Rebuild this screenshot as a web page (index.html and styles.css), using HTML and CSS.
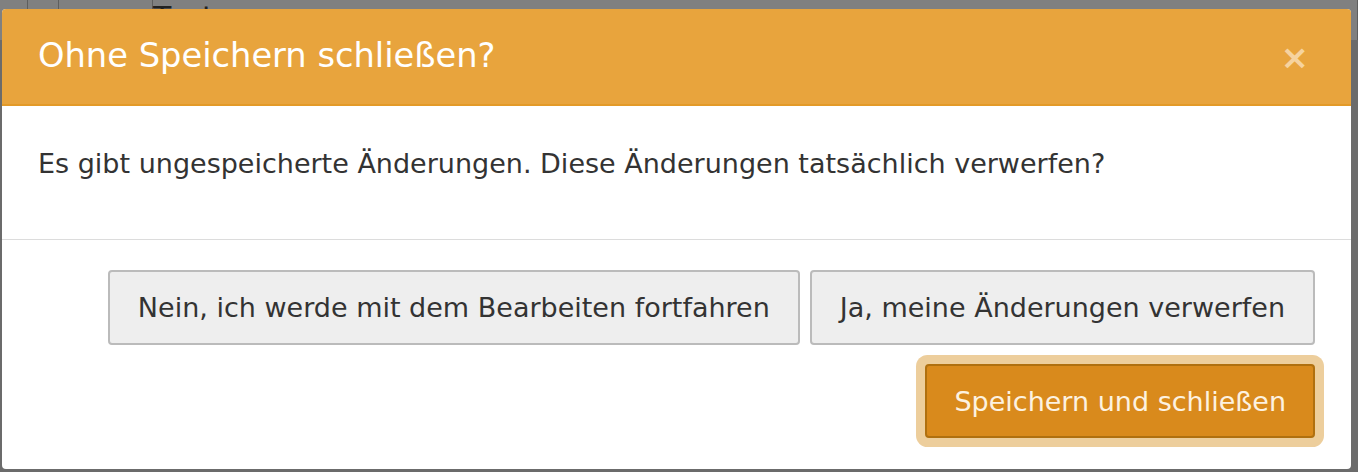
FILE: index.html
```html
<!DOCTYPE html>
<html lang="de">
<head>
    <meta charset="UTF-8">
    <title>Ohne Speichern schließen?</title>
    <link rel="stylesheet" href="styles.css">
</head>
<body>

    <!-- page behind the overlay -->
    <div class="backdrop">
        <div class="bg-row top">
            <span class="cell w1"></span>
            <span class="cell w2"></span>
            <span class="cell w3"><i class="chk"></i></span>
            <span class="cell w4">Text</span>
        </div>
    </div>

    <div class="modal">
        <div class="modal-header">
            <h3>Ohne Speichern schließen?</h3>
            <span class="close">&times;</span>
        </div>
        <div class="modal-body">
            <p>Es gibt ungespeicherte Änderungen. Diese Änderungen tatsächlich verwerfen?</p>
        </div>
        <div class="modal-footer">
            <div class="btn-row">
                <button class="btn">Nein, ich werde mit dem Bearbeiten fortfahren</button>
                <button class="btn">Ja, meine Änderungen verwerfen</button>
            </div>
            <div class="btn-row">
                <button class="btn btn-primary">Speichern und schließen</button>
            </div>
        </div>
    </div>

</body>
</html>
```

FILE: styles.css
```css
html, body {
    margin: 0;
    height: 100%;
}
body {
    font-family: "DejaVu Sans", Verdana, sans-serif;
    background: #6a6a6a;
    overflow: hidden;
    position: relative;
}
.backdrop {
    height: 100%;
    background: #6b6b6b;
}
.bg-row {
    display: flex;
    height: 40px;
    background: #808080;
}
.cell {
    border-right: 1px solid #5e5e5e;
    color: #222;
    font-size: 30px;
}
.w1 { width: 27px; }
.w2 { width: 30px; }
.w3 { width: 93px; }
.w4 { flex: 1; }
.modal {
    position: absolute;
    left: 2px;
    top: 9px;
    width: 1349px;
    height: 460px;
    background: #fff;
    border-radius: 4px;
    overflow: hidden;
}
.modal-header {
    height: 95px;
    background: #e8a43d;
    border-bottom: 2px solid #e39a28;
    display: flex;
    align-items: center;
    justify-content: space-between;
    padding: 0 42px 0 36px;
}
.modal-header h3 {
    margin: 0 0 2px;
    color: #fff;
    font-weight: normal;
    font-size: 33.7px;
}
.close {
    color: #f6d39f;
    font-size: 34px;
    font-weight: bold;
    line-height: 1;
}
.modal-body {
    height: 134px;
    box-sizing: border-box;
    padding: 42px 36px 0;
    border-bottom: 1px solid #dcdcdc;
}
.modal-body p {
    margin: 0;
    color: #333;
    font-size: 27px;
}
.modal-footer {
    padding: 30px 36px 0;
    display: flex;
    flex-direction: column;
    gap: 19px;
}
.btn-row {
    display: flex;
    justify-content: flex-end;
    gap: 10px;
}
.btn {
    font-family: inherit;
    font-size: 27px;
    height: 75px;
    padding: 0 28px;
    color: #333;
    background: #eee;
    border: 2px solid #bbb;
    border-radius: 4px;
}
.btn-primary {
    height: 74px;
    padding: 0 27px;
    color: #fdf2e0;
    background: #d98a1c;
    border-color: #b0700f;
    box-shadow: 0 0 0 9px #edce9c;
}
```
